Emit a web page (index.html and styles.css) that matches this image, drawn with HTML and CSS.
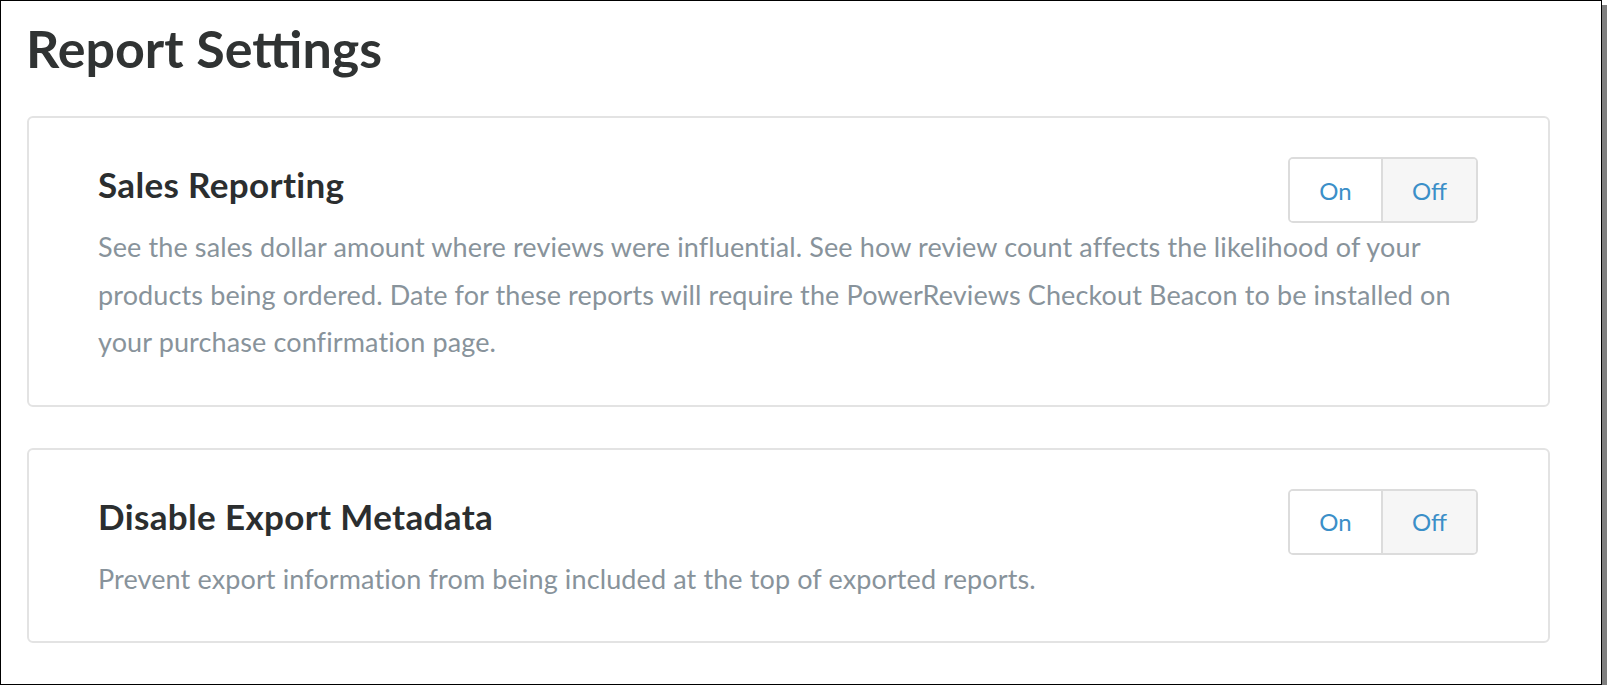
FILE: index.html
```html
<!DOCTYPE html>
<html lang="en">
<head>
<meta charset="utf-8">
<title>Report Settings</title>
<link rel="stylesheet" href="styles.css">
</head>
<body>
<div class="frame">
  <h1 class="page-title">Report Settings</h1>
  <section class="card">
    <div class="card-head">
      <h2 class="card-title">Sales Reporting</h2>
      <div class="toggle">
        <button class="toggle-btn">On</button>
        <button class="toggle-btn is-active">Off</button>
      </div>
    </div>
    <p class="card-desc">See the sales dollar amount where reviews were influential. See how review count affects the likelihood of your products being ordered. Date for these reports will require the PowerReviews Checkout Beacon to be installed on your purchase confirmation page.</p>
  </section>
  <section class="card">
    <div class="card-head">
      <h2 class="card-title">Disable Export Metadata</h2>
      <div class="toggle">
        <button class="toggle-btn">On</button>
        <button class="toggle-btn is-active">Off</button>
      </div>
    </div>
    <p class="card-desc">Prevent export information from being included at the top of exported reports.</p>
  </section>
</div>
</body>
</html>
```

FILE: styles.css
```css
html, body {
  margin: 0;
  padding: 0;
  background: #ffffff;
}

body {
  font-family: Lato, "Open Sans", sans-serif;
}

.frame {
  box-sizing: border-box;
  width: 1602px;
  height: 685px;
  border: 1px solid #000000;
  box-shadow: 5px 5px 0 #808080;
  background: #ffffff;
  padding: 16px 51px 0 26px;
}

.page-title {
  margin: 0 0 37px -1px;
  font-size: 52px;
  line-height: 1.2;
  font-weight: 700;
  color: #303333;
}

.card {
  border: 2px solid #e3e3e3;
  border-radius: 6px;
  padding: 39px 70px 39px 69px;
  margin-bottom: 41px;
}

.card-head {
  display: flex;
  justify-content: space-between;
  align-items: flex-start;
}

.card-title {
  margin: 6px 0 0 0;
  font-size: 35px;
  letter-spacing: 0.35px;
  line-height: 1.2;
  font-weight: 700;
  color: #2b2e2f;
}

.toggle {
  display: flex;
  height: 66px;
  box-sizing: border-box;
  border: 2px solid #dcdcdc;
  border-radius: 5px;
  overflow: hidden;
}

.toggle-btn {
  font-family: Lato, "Open Sans", sans-serif;
  font-size: 24px;
  color: #3b8fc8;
  background: #ffffff;
  border: 0;
  margin: 0;
  padding: 0;
  width: 91px;
}

.toggle-btn + .toggle-btn {
  border-left: 2px solid #dcdcdc;
  width: 95px;
}

.toggle-btn.is-active {
  background: #f6f6f6;
}

.card-desc {
  margin: 0;
  font-size: 27px;
  letter-spacing: 0.12px;
  line-height: 47.5px;
  color: #88939b;
}
```
